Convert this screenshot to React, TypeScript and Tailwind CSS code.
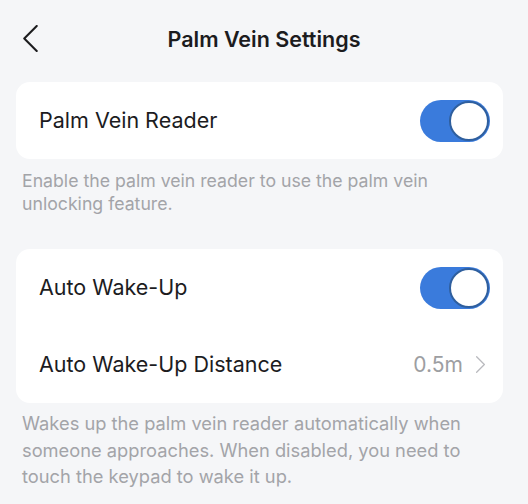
function Toggle({ on }: { on: boolean }) {
  return (
    <div
      className={`relative w-[70px] h-[42px] rounded-full ${
        on ? "bg-[#3a7bdc]" : "bg-[#e2e3e7]"
      }`}
    >
      <div
        className={`absolute top-[1px] w-[40px] h-[40px] rounded-full bg-white border-[2.5px] border-[#2f5f9e] ${
          on ? "right-[1px]" : "left-[1px]"
        }`}
      />
    </div>
  );
}

function Chevron({ dir, className }: { dir: "left" | "right"; className: string }) {
  return (
    <svg viewBox="0 0 14 26" fill="none" className={className}>
      <path
        d={dir === "left" ? "M13 1 1 13l12 12" : "M1 1l12 12L1 25"}
        stroke="currentColor"
        strokeWidth={2}
        strokeLinecap="round"
        strokeLinejoin="round"
      />
    </svg>
  );
}

export default function App() {
  return (
    <div
      className="w-[528px] h-[504px] bg-[#f5f6f8] text-[#1c1c1e] overflow-hidden"
      style={{ fontFamily: "Inter, 'Noto Sans', sans-serif" }}
    >
      {/* top bar */}
      <div className="relative h-[82px] flex items-center justify-center pb-[4px]">
        <Chevron dir="left" className="absolute left-[23px] top-[25px] w-[15px] h-[27px] text-[#1c1c1e]" />
        <h1 className="text-[21.5px] font-semibold">Palm Vein Settings</h1>
      </div>

      {/* reader */}
      <div className="mx-[16px] w-[487px] bg-white rounded-[14px] h-[77px] flex items-center justify-between pl-[23px] pr-[13px]">
        <span className="text-[21.5px]">Palm Vein Reader</span>
        <Toggle on />
      </div>
      <p className="px-[22px] pt-[10px] text-[17.7px] leading-[23px] text-[#a3a4a8]">
        Enable the palm vein reader to use the palm vein
        <br />
        unlocking feature.
      </p>

      {/* wake-up */}
      <div className="mx-[16px] mt-[34px] w-[487px] bg-white rounded-[14px] flex flex-col">
        <div className="h-[77px] flex items-center justify-between pl-[23px] pr-[13px]">
          <span className="text-[21.5px]">Auto Wake-Up</span>
          <Toggle on />
        </div>
        <div className="h-[77px] flex items-center justify-between pl-[23px] pr-[18px]">
          <span className="text-[21.5px]">Auto Wake-Up Distance</span>
          <span className="flex items-center gap-[13px] text-[21px] text-[#9d9ea2]">
            0.5m
            <Chevron dir="right" className="w-[9px] h-[17px] text-[#b9babe]" />
          </span>
        </div>
      </div>
      <p className="px-[22px] pt-[7px] text-[18.3px] leading-[26.5px] text-[#a3a4a8]">
        Wakes up the palm vein reader automatically when
        <br />
        someone approaches. When disabled, you need to
        <br />
        touch the keypad to wake it up.
      </p>
    </div>
  );
}
